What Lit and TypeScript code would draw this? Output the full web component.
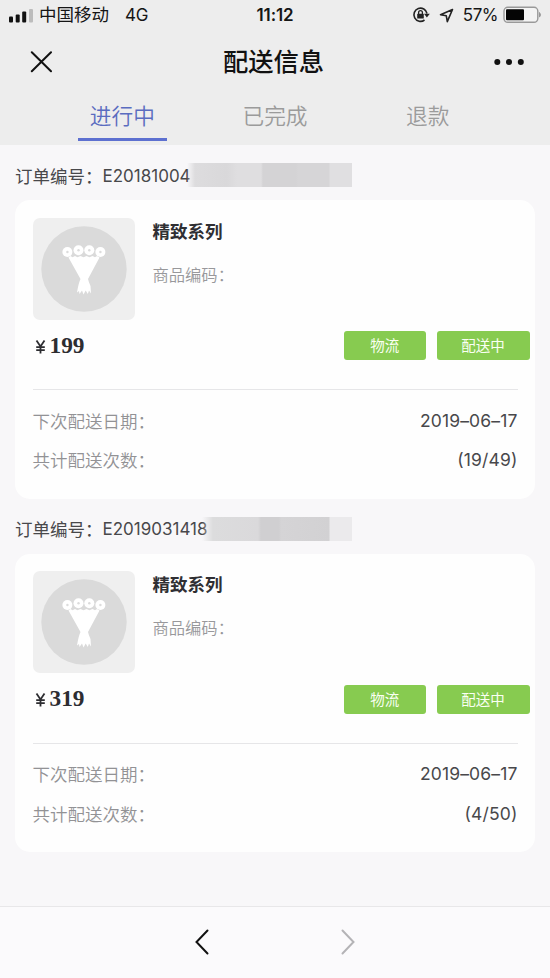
import { LitElement, html, css, svg } from "lit";
import { customElement, property } from "lit/decorators.js";

interface Order {
  no: string;
  mask: "a" | "b";
  name: string;
  price: string;
  next: string;
  count: string;
}

const orders: Order[] = [
  { no: "E20181004", mask: "a", name: "精致系列", price: "199", next: "2019–06–17", count: "(19/49)" },
  { no: "E2019031418", mask: "b", name: "精致系列", price: "319", next: "2019–06–17", count: "(4/50)" },
];

const flower = (x: number, y: number) => svg`
  <circle cx=${x} cy=${y} r="5" fill="#fff"/>
  <circle cx=${x} cy=${y} r="1.2" fill="#dcdcdc"/>`;

@customElement("order-card")
class OrderCard extends LitElement {
  @property({ attribute: false }) order!: Order;

  static styles = css`
    :host { display: block; }
    .head {
      height: 55px; padding-left: 15px; display: flex; align-items: center;
      font-size: 17.5px; color: #48484b; box-sizing: border-box; padding-top: 5px;
    }
    .no { position: relative; white-space: nowrap; letter-spacing: 0; font-size: 17px; padding-top: 1px; }
    .mask { position: absolute; top: 50%; height: 24px; margin-top: -12px; }
    .mask.a {
      left: 84px; width: 165.5px;
      background: linear-gradient(90deg, #dddcde00 0, #dddcde 8px, #d9d8da 40px, #dfdee0 50px, #dfdee0 74px, #d4d3d5 76px, #d4d3d5 109px, #d6d5d7 111px, #d6d5d7 142px, #e0dfe1 143px);
    }
    .mask.b {
      left: 99px; width: 150.5px;
      background: linear-gradient(90deg, #dcdcdd00 0, #dcdcdd 11px, #dad9db 56px, #d0cfd1 59px, #d0cfd1 77px, #d5d4d6 79px, #d2d1d3 127px, #ebeaec 128px);
    }
    .card {
      margin: 0 15px; height: 298.5px; box-sizing: border-box; border-radius: 15px;
      background: #fefefe; padding: 17.5px 17.5px 0;
    }
    .top { display: flex; gap: 18px; }
    .thumb { display: block; width: 102px; height: 102px; border-radius: 7px; background: #efefef; }
    .info { display: flex; flex-direction: column; }
    .name { font-size: 17.5px; line-height: 28px; font-weight: 700; color: #2f2f33; }
    .code { font-size: 16.3px; line-height: 24px; margin-top: 17px; color: #98989b; font-weight: 350; }
    .deal {
      display: flex; align-items: center; margin: 11px -12px 0 0; height: 30px; gap: 11px;
    }
    .price {
      flex: 1; display: flex; align-items: baseline; gap: 3.5px; padding: 0 0 1px 2.5px; color: #2d2d31;
      font: 700 23.3px/29px "Liberation Serif", serif;
    }
    .yen { width: 11px; height: 14px; align-self: center; margin-top: 3px; }
    .btn {
      height: 29px; border-radius: 3px; background: #87cb50; color: #fafff3; font-size: 14.5px;
      display: flex; align-items: center; justify-content: center; box-sizing: border-box; border: 0;
      font-family: inherit; padding: 0 0 2px;
    }
    .flow { width: 81.5px; }
    .state { width: 93px; }
    .line { height: 1px; background: #e6e6e8; margin-top: 28.5px; }
    .row {
      display: flex; justify-content: space-between; align-items: center; height: 39.5px;
      font-size: 17.5px; color: #929295; font-weight: 350;
    }
    .line + .row { margin-top: 10.5px; }
    .val { color: #48484b; font-weight: 400; letter-spacing: 0.15px; }
  `;

  render() {
    const o = this.order;
    const colon = html`<span>：</span>`;
    return html`
      <div class="head"><span>订单编号${colon}</span><span class="no">${o.no}<i class="mask ${o.mask}"></i></span></div>
      <div class="card">
        <div class="top">
          <svg class="thumb" viewBox="0 0 102 102">
            <circle cx="51" cy="51" r="42.7" fill="#dadada"/>
            <path fill="#fff" d="M35.5 39.5l2-1.500 2 1.200 2.500-1.200 2.500 1.200 3-1.200 3 1.200 3-1.200 3 1.200 3-1.200 2.500 1.200 2-1.200 2.500 1.500L55 61Q55.500 63.500 57.500 68L58 75.500L56 72.500L54.800 76L52.700 72.500L50.500 76.500L49 72.500L46.500 76L46 73L44 74.500Q45.500 65 47.500 61z"/>
            ${flower(34.4, 34)}${flower(45.5, 32.3)}${flower(56.3, 32.3)}${flower(67.4, 34)}
          </svg>
          <div class="info">
            <div class="name">${o.name}</div>
            <div class="code">商品编码${colon}</div>
          </div>
        </div>
        <div class="deal">
          <div class="price">
            <svg class="yen" viewBox="0 0 11 14" fill="none" stroke="#2d2d31" stroke-width="1.8">
              <path d="M1.500 .5L5.500 6.500L9.500 .5M5.500 6.500V13.500M1.200 7.200H9.800M1.200 10.200H9.800"/>
            </svg>
            <span>${o.price}</span>
          </div>
          <button class="btn flow">物流</button>
          <button class="btn state">配送中</button>
        </div>
        <div class="line"></div>
        <div class="row"><span>下次配送日期${colon}</span><span class="val">${o.next}</span></div>
        <div class="row"><span>共计配送次数${colon}</span><span class="val">${o.count}</span></div>
      </div>`;
  }
}

@customElement("app-root")
class AppRoot extends LitElement {
  static styles = css`
    :host {
      display: flex; flex-direction: column; height: 978px; width: 550px; overflow: hidden;
      background: #f8f7f9; font-family: Inter, "Noto Sans CJK SC", sans-serif;
    }
    .header { background: #ededed; height: 145px; display: flex; flex-direction: column; }
    .status {
      height: 30px; display: grid; grid-template-columns: 1fr auto 1fr; align-items: center;
      padding: 0 9px; color: #151515; font-size: 17px;
    }
    .left, .right { display: flex; align-items: center; }
    .right { justify-content: flex-end; }
    .bars { width: 25px; height: 15px; margin-right: 5px; }
    .carrier { font-size: 17.5px; line-height: 26px; margin-right: 16px; }
    .net, .pct { font-size: 17px; letter-spacing: -0.3px; }
    .time { font-weight: 600; letter-spacing: -0.1px; }
    .lock { width: 18px; height: 18px; margin-right: 9px; }
    .nav-arrow { width: 15px; height: 15px; margin-right: 9px; }
    .pct { margin-right: 5px; letter-spacing: -0.5px; }
    .battery { width: 39px; height: 18px; margin-right: -1px; }
    .nav { height: 63px; display: grid; grid-template-columns: 80px 1fr 80px; align-items: center; }
    .close { width: 22px; height: 22px; margin-left: 30px; }
    .title { text-align: center; font-size: 25.3px; line-height: 36px; font-weight: 500; color: #111; padding-right: 3px; }
    .more { width: 32px; height: 8px; margin-left: 23px; }
    .tabs { flex: 1; display: flex; padding: 0 46px; }
    .tab {
      flex: 1; display: flex; justify-content: center; color: #9b9b9b; font-size: 21.7px; font-weight: 350;
      line-height: 47px;
    }
    .tab span { width: 89px; text-align: center; height: 48px; box-sizing: border-box; }
    .tab.on { color: #5a6cc0; }
    .tab.on span { border-bottom: 3px solid #5d70d0; }
    .body { flex: 1; }
    .footer {
      height: 72px; box-sizing: border-box; border-top: 1.5px solid #e8e7e9; background: #fbfafc;
      display: flex; justify-content: center; align-items: center; gap: 132px; padding-bottom: 1px;
    }
    .chev { width: 14px; height: 26px; }
  `;

  render() {
    return html`
      <div class="header">
        <div class="status">
          <div class="left">
            <svg class="bars" viewBox="0 0 25 15">
              <rect x="0" y="8.500" width="4" height="6" rx="1" fill="#111"/>
              <rect x="6.700" y="6.500" width="4" height="8" rx="1" fill="#111"/>
              <rect x="13.200" y="3.500" width="4" height="11" rx="1" fill="#111"/>
              <rect x="20" y="1" width="4" height="13.500" rx="1" fill="#bcbcbc"/>
            </svg>
            <span class="carrier">中国移动</span><span class="net">4G</span>
          </div>
          <div class="time">11:12</div>
          <div class="right">
            <svg class="lock" viewBox="0 0 18 18" fill="none" stroke="#222" stroke-width="1.600">
              <path d="M15 7.500A6.600 6.600 0 1 0 12.500 14"/>
              <path d="M12 7.800h5.800l-2.900 3.800z" fill="#222" stroke="none"/>
              <rect x="5.200" y="7.800" width="6.600" height="4.800" rx=".6" fill="#222" stroke="none"/>
              <path d="M6.600 8.200V6.600a1.900 1.900 0 0 1 3.800 0V8.200" stroke-width="1.300"/>
            </svg>
            <svg class="nav-arrow" viewBox="0 0 15 15" fill="none" stroke="#222" stroke-width="1.600" stroke-linejoin="round">
              <path d="M13.500 1.500L1.500 6.800L7.300 7.800L8.300 13.600z"/>
            </svg>
            <span class="pct">57%</span>
            <svg class="battery" viewBox="0 0 39 18">
              <rect x="1" y="1.300" width="33.800" height="15" rx="3.800" fill="#f4f4f4" stroke="#999" stroke-width="1.400"/>
              <rect x="3" y="3.300" width="18" height="11" rx="1" fill="#050505"/>
              <path d="M36.500 6.500q2 2.300 0 4.600z" fill="#999" stroke="#999"/>
            </svg>
          </div>
        </div>
        <div class="nav">
          <svg class="close" viewBox="0 0 22 22" fill="none" stroke="#111" stroke-width="2" stroke-linecap="round">
            <path d="M1.800 1.200L21 20.200M21 1.200L1.800 20.200"/>
          </svg>
          <div class="title">配送信息</div>
          <svg class="more" viewBox="0 0 32 8" fill="#111">
            <circle cx="4.300" cy="4" r="3"/><circle cx="16" cy="4" r="3"/><circle cx="27.800" cy="4" r="3"/>
          </svg>
        </div>
        <div class="tabs">
          <div class="tab on"><span>进行中</span></div>
          <div class="tab"><span>已完成</span></div>
          <div class="tab"><span>退款</span></div>
        </div>
      </div>
      <div class="body">${orders.map((o) => html`<order-card .order=${o}></order-card>`)}</div>
      <div class="footer">
        <svg class="chev" viewBox="0 0 14 26" fill="none" stroke="#111" stroke-width="2" stroke-linecap="round">
          <path d="M12.500 1.500L1.500 13L12.500 24.500"/>
        </svg>
        <svg class="chev" viewBox="0 0 14 26" fill="none" stroke="#b4b3b6" stroke-width="2" stroke-linecap="round">
          <path d="M1.500 1.500L12.500 13L1.500 24.500"/>
        </svg>
      </div>`;
  }
}
